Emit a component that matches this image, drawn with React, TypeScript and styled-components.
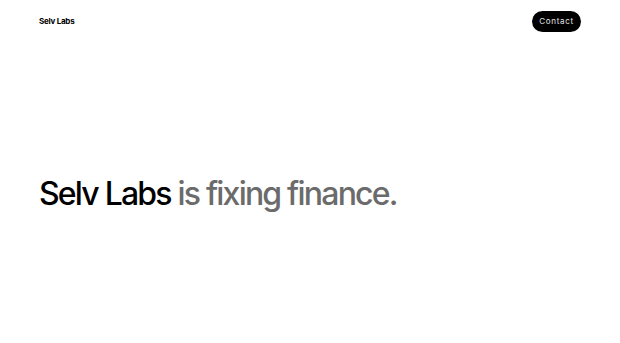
import React from 'react'
import styled, { createGlobalStyle } from 'styled-components'

const GlobalStyle = createGlobalStyle`
  html, body {
    margin: 0;
    padding: 0;
    background: #ffffff;
    font-family: Inter, "Noto Sans", sans-serif;
  }
`

const Page = styled.div`
  display: flex;
  flex-direction: column;
  height: 343px;
  padding: 0 39px;
  box-sizing: border-box;
`

const Header = styled.header`
  display: flex;
  align-items: center;
  justify-content: space-between;
  height: 42px;
`

const Logo = styled.div`
  font-size: 8px;
  font-weight: 700;
  color: #000;
  letter-spacing: -0.25px;
`

const ContactButton = styled.button`
  background: #000;
  color: #e4e4e4;
  border: none;
  border-radius: 11px;
  height: 21px;
  width: 49px;
  font-family: Inter, sans-serif;
  font-size: 8px;
  font-weight: 400;
  letter-spacing: 0.7px;
  cursor: pointer;
  padding: 0;
`

const Hero = styled.main`
  flex: 1;
  display: flex;
  align-items: flex-start;
  padding-top: 136px;
`

const Headline = styled.h1`
  margin: 0;
  font-size: 32px;
  font-weight: 500;
  letter-spacing: -1.8px;
  color: #6b6b6b;
  line-height: 1;
`

const Brand = styled.span`
  color: #000;
`

export default function App() {
  return (
    <>
      <GlobalStyle />
      <Page>
        <Header>
          <Logo>Selv Labs</Logo>
          <ContactButton>Contact</ContactButton>
        </Header>
        <Hero>
          <Headline>
            <Brand>Selv Labs</Brand> is fixing finance.
          </Headline>
        </Hero>
      </Page>
    </>
  )
}
